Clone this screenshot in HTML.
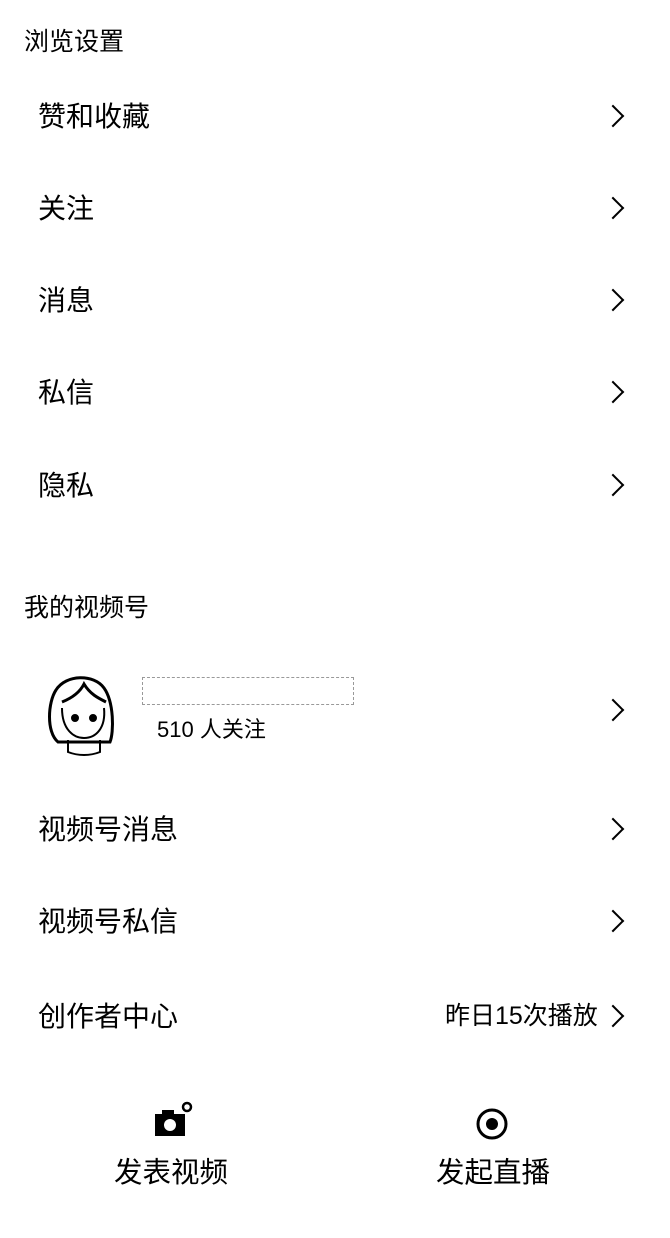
<!DOCTYPE html>
<html><head><meta charset="utf-8"><style>
body{margin:0;width:670px;height:1238px;background:#fff;position:relative;overflow:hidden;font-family:"Liberation Sans","Noto Sans CJK SC",sans-serif;color:#000}
.t{position:absolute;white-space:nowrap;line-height:1}
.h{font-size:25px;left:24px}
.i{font-size:28px;left:38px}
.c{position:absolute;left:605px;width:14px;height:14px;border-right:2px solid #000;border-top:2px solid #000;transform:rotate(45deg)}
</style></head><body>
<div class="t h" style="top:30px">浏览设置</div>
<div class="t i" style="top:103px">赞和收藏</div><div class="c" style="top:108px"></div>
<div class="t i" style="top:195px">关注</div><div class="c" style="top:200px"></div>
<div class="t i" style="top:287px">消息</div><div class="c" style="top:292px"></div>
<div class="t i" style="top:379px">私信</div><div class="c" style="top:384px"></div>
<div class="t i" style="top:472px">隐私</div><div class="c" style="top:477px"></div>
<div class="t h" style="top:596px">我的视频号</div>
<svg style="position:absolute;left:44px;top:672px" width="76" height="86" viewBox="0 0 76 86" fill="none" stroke="#000" stroke-width="3">
<path d="M14 70 C2 60 4 30 12 18 C22 2 50 2 60 16 C70 30 70 60 66 70 Z"/>
<path d="M18 30 C28 26 36 20 40 12 C46 22 54 26 62 30"/>
<path d="M18 36 C18 58 30 66 40 66 C52 66 62 56 60 36" stroke-width="2"/>
<circle cx="31" cy="46" r="2.5" fill="#000"/><circle cx="49" cy="46" r="2.5" fill="#000"/>
<path d="M24 68 L24 80 C34 84 46 84 56 80 L56 68" stroke-width="2"/>
</svg>
<div style="position:absolute;left:142px;top:677px;width:210px;height:26px;border:1px dashed #999"></div>
<div class="t" style="left:157px;top:719px;font-size:22px">510 人关注</div>
<div class="c" style="top:702px"></div>
<div class="t i" style="top:816px">视频号消息</div><div class="c" style="top:821px"></div>
<div class="t i" style="top:908px">视频号私信</div><div class="c" style="top:913px"></div>
<div class="t i" style="top:1003px">创作者中心</div><div class="c" style="top:1008px"></div>
<div class="t" style="left:445px;top:1004px;font-size:25px">昨日15次播放</div>
<svg style="position:absolute;left:152px;top:1100px" width="44" height="40" viewBox="0 0 44 40">
<rect x="3" y="14" width="30" height="22" fill="#000"/><rect x="10" y="10" width="12" height="6" fill="#000"/>
<circle cx="18" cy="25" r="6" fill="#fff"/><circle cx="35" cy="7" r="4" fill="none" stroke="#000" stroke-width="2.5"/>
</svg>
<svg style="position:absolute;left:474px;top:1106px" width="36" height="36" viewBox="0 0 36 36">
<circle cx="18" cy="18" r="14" fill="none" stroke="#000" stroke-width="3"/><circle cx="18" cy="18" r="6" fill="#000"/>
</svg>
<div class="t" style="left:114px;top:1159px;font-size:28.5px">发表视频</div>
<div class="t" style="left:436px;top:1159px;font-size:28.5px">发起直播</div>
</body></html>
